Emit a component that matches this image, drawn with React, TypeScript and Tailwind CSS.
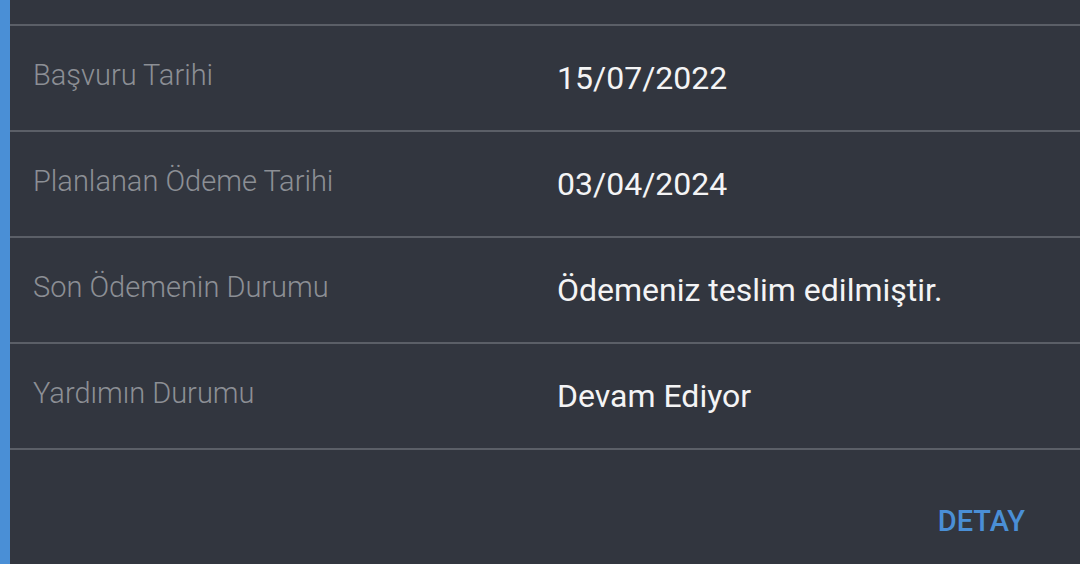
export default function App() {
  const rows = [
    { label: "Başvuru Tarihi", value: "15/07/2022" },
    { label: "Planlanan Ödeme Tarihi", value: "03/04/2024" },
    { label: "Son Ödemenin Durumu", value: "Ödemeniz teslim edilmiştir." },
    { label: "Yardımın Durumu", value: "Devam Ediyor" },
  ];

  return (
    <div
      className="flex w-[1080px] h-[564px] bg-[#32363f] overflow-hidden"
      style={{ fontFamily: "Roboto, 'Noto Sans', sans-serif" }}
    >
      <div className="w-[10px] shrink-0 bg-[#4a8fd6]" />
      <div className="flex flex-col flex-1">
        <div className="h-[24px]" />
        {rows.map((r) => (
          <div
            key={r.label}
            className="flex items-center h-[106px] border-t-2 border-[#5b5f67]"
          >
            <div className="w-[547px] pl-[23px] pb-[4px] text-[29px] font-light text-[#8c8f95]">
              {r.label}
            </div>
            <div className="text-[32px] text-[#f4f4f5]">{r.value}</div>
          </div>
        ))}
        <div className="flex flex-1 items-center justify-end pr-[55px] pt-[30px] border-t-2 border-[#5b5f67]">
          <span className="text-[29px] font-medium text-[#4a8fd6]">DETAY</span>
        </div>
      </div>
    </div>
  );
}
